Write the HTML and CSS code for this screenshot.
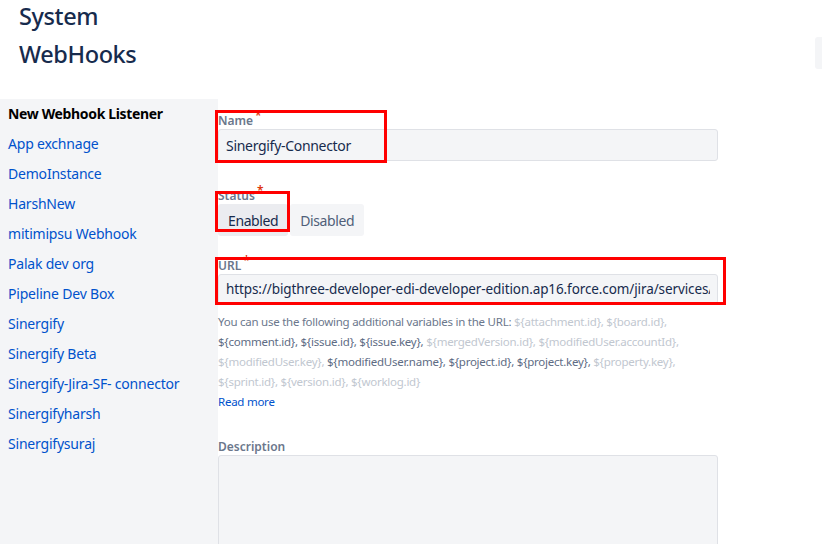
FILE: index.html
```html
<!DOCTYPE html>
<html lang="en">
<head>
    <meta charset="UTF-8">
    <meta name="viewport" content="width=device-width, initial-scale=1.0">
    <title>System WebHooks</title>
    <link rel="stylesheet" href="styles.css">
</head>
<body>
    <div class="page-header">
        <h1 class="page-title">System WebHooks</h1>
        <div class="header-action"></div>
    </div>

    <div class="layout">
        <ul class="sidebar">
            <li class="sidebar-item active">New Webhook Listener</li>
            <li class="sidebar-item"><a href="#">App exchnage</a></li>
            <li class="sidebar-item"><a href="#">DemoInstance</a></li>
            <li class="sidebar-item"><a href="#">HarshNew</a></li>
            <li class="sidebar-item"><a href="#">mitimipsu Webhook</a></li>
            <li class="sidebar-item"><a href="#">Palak dev org</a></li>
            <li class="sidebar-item"><a href="#">Pipeline Dev Box</a></li>
            <li class="sidebar-item"><a href="#">Sinergify</a></li>
            <li class="sidebar-item"><a href="#">Sinergify Beta</a></li>
            <li class="sidebar-item"><a href="#">Sinergify-Jira-SF- connector</a></li>
            <li class="sidebar-item"><a href="#">Sinergifyharsh</a></li>
            <li class="sidebar-item"><a href="#">Sinergifysuraj</a></li>
        </ul>

        <form class="webhook-form">
            <!-- 名称 -->
            <div class="field field-name">
                <label class="field-label">Name<span class="req">*</span></label>
                <input class="text-input" type="text" value="Sinergify-Connector">
            </div>

            <div class="field field-status">
                <label class="field-label">Status<span class="req">*</span></label>
                <div class="toggle-group">
                    <button type="button" class="toggle-btn selected">Enabled</button>
                    <button type="button" class="toggle-btn">Disabled</button>
                </div>
            </div>

            <div class="field field-url">
                <label class="field-label">URL<span class="req">*</span></label>
                <input class="text-input url-input" type="text" value="https://bigthree-developer-edi-developer-edition.ap16.force.com/jira/services/apexrest/webhook">
            </div>

            <p class="help-text">
                You can use the following additional variables in the URL:
                <span class="var-off">${attachment.id},</span> <span class="var-off">${board.id},</span>
                <span class="var-on">${comment.id},</span> <span class="var-on">${issue.id},</span> <span class="var-on">${issue.key},</span>
                <span class="var-off">${mergedVersion.id},</span> <span class="var-off">${modifiedUser.accountId},</span>
                <span class="var-off">${modifiedUser.key},</span> <span class="var-on">${modifiedUser.name},</span>
                <span class="var-on">${project.id},</span> <span class="var-on">${project.key},</span> <span class="var-off">${property.key},</span>
                <span class="var-off">${sprint.id},</span> <span class="var-off">${version.id},</span> <span class="var-off">${worklog.id}</span>
                <br><a href="#" class="read-more">Read more</a>
            </p>

            <div class="field field-desc">
                <label class="field-label">Description</label>
                <textarea class="text-area"></textarea>
            </div>

            <!-- 标注框 -->
            <div class="mark mark-name"></div>
            <div class="mark mark-status"></div>
            <div class="mark mark-url"></div>
        </form>
    </div>
</body>
</html>
```

FILE: styles.css
```css
* {
    margin: 0;
    padding: 0;
    box-sizing: border-box;
}
body {
    background: #fff;
    font-family: "Noto Sans", "Open Sans", sans-serif;
    color: #172b4d;
    overflow: hidden;
    width: 822px;
    height: 544px;
}
.page-header {
    display: flex;
    height: 99px;
}
.page-title {
    width: 200px;
    padding-left: 19px;
    margin-top: -3px;
    font-size: 23.5px;
    font-weight: 500;
    letter-spacing: -0.4px;
    line-height: 38px;
    color: #172b4d;
}
.header-action {
    margin-left: auto;
    margin-top: 37px;
    margin-right: -40px;
    width: 47px;
    height: 32px;
    background: #f4f5f7;
    border-radius: 3px;
}
.layout {
    display: flex;
    height: 445px;
}
.sidebar {
    list-style: none;
    width: 218px;
    flex-shrink: 0;
    background: #f4f5f7;
}
.sidebar-item {
    height: 30px;
    line-height: 30px;
    padding-left: 8px;
    font-size: 14px;
    letter-spacing: -0.2px;
    white-space: nowrap;
}
.sidebar-item a {
    color: #0052cc;
    text-decoration: none;
}
.sidebar-item.active {
    font-weight: 700;
    letter-spacing: -0.35px;
    color: #000;
}
.webhook-form {
    position: relative;
    width: 500px;
}
.field-label {
    display: block;
    height: 16px;
    font-size: 12px;
    line-height: 16px;
    font-weight: 600;
    color: #6b778c;
}
.req {
    color: #de350b;
    margin-left: 2px;
    position: relative;
    top: -5px;
}
.field-name {
    margin-top: 14px;
}
.field-status {
    margin-top: 27px;
}
.field-url {
    margin-top: 22px;
}
.field-desc {
    margin-top: 27px;
}
.text-input {
    display: block;
    width: 500px;
    height: 32px;
    padding: 0 7px;
    background: #f4f5f7;
    border: 1px solid #dfe1e6;
    border-radius: 3px;
    font-family: inherit;
    font-size: 14px;
    letter-spacing: -0.3px;
    color: #172b4d;
}
.url-input {
    height: 30px;
    font-size: 13.5px;
    letter-spacing: -0.1px;
}
.toggle-group {
    display: flex;
    gap: 2px;
}
.toggle-btn {
    height: 32px;
    padding: 0 10px;
    border: none;
    border-radius: 3px;
    background: #f4f5f7;
    font-family: inherit;
    font-size: 14px;
    letter-spacing: -0.4px;
    color: #505f79;
}
.toggle-btn.selected {
    background: #ebecf0;
    color: #172b4d;
}
.help-text {
    margin-top: 8px;
    font-size: 11.5px;
    letter-spacing: -0.25px;
    line-height: 20px;
    color: #6b778c;
}
.var-off {
    color: #c1c7d0;
}
.var-on {
    color: #5e6c84;
}
.read-more {
    color: #0052cc;
    text-decoration: none;
}
.text-area {
    display: block;
    width: 500px;
    height: 100px;
    background: #f4f5f7;
    border: 1px solid #dfe1e6;
    border-radius: 3px;
    font-family: inherit;
}
.mark {
    position: absolute;
    border: 3px solid #ff0000;
}
.mark-name {
    left: -3px;
    top: 11px;
    width: 172px;
    height: 53px;
}
.mark-status {
    left: -3px;
    top: 92px;
    width: 75px;
    height: 41px;
}
.mark-url {
    left: -3px;
    top: 158px;
    width: 511px;
    height: 48px;
}
```
